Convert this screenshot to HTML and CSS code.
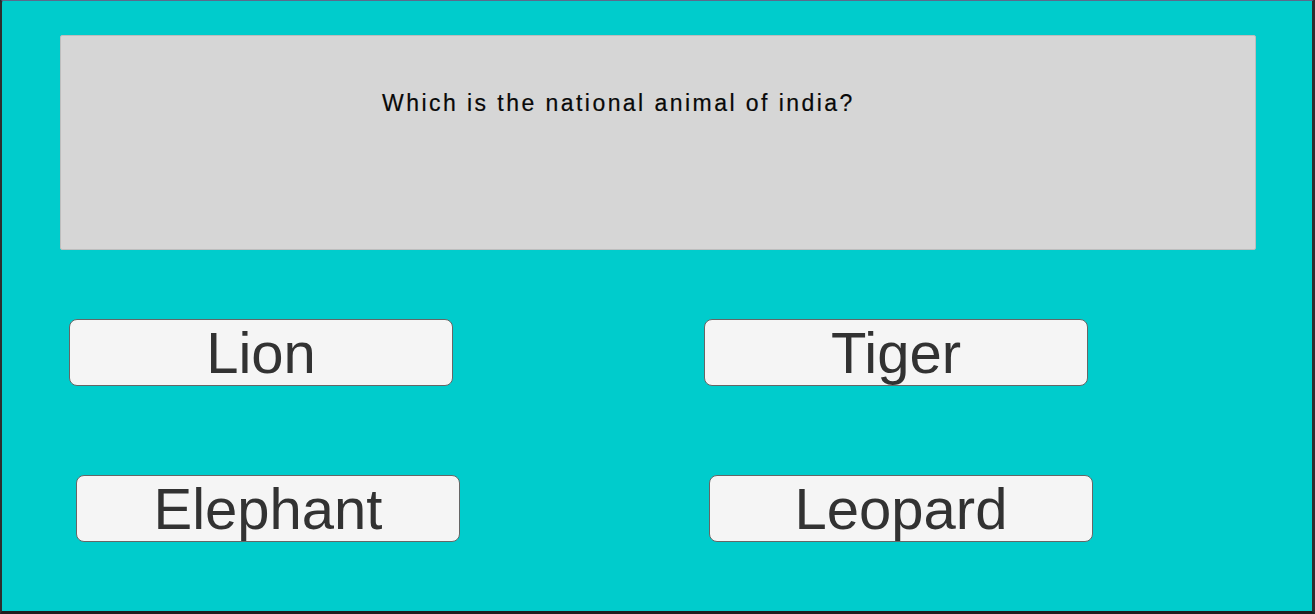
FILE: index.html
```html
<!DOCTYPE html>
<html>
<head>
<meta charset="utf-8">
<link rel="stylesheet" href="styles.css">
</head>
<body>
<div class="frame">
  <div class="question">
    <p class="question-text">Which is the national animal of india?</p>
  </div>
  <div class="answers">
    <div class="row row-1">
      <button class="answer a-lion">Lion</button>
      <button class="answer a-tiger">Tiger</button>
    </div>
    <div class="row row-2">
      <button class="answer a-elephant">Elephant</button>
      <button class="answer a-leopard">Leopard</button>
    </div>
  </div>
</div>
</body>
</html>
```

FILE: styles.css
```css
html, body {
  margin: 0;
  padding: 0;
  width: 1315px;
  height: 614px;
  overflow: hidden;
  background: #262626;
}

.frame {
  box-sizing: border-box;
  width: 1315px;
  height: 614px;
  background: #00cccc;
  border-top: 1px solid #5b6a8c;
  border-left: 2px solid #2e2e2e;
  border-right: 3px solid #2e2e2e;
  border-bottom: 3px solid #1e1e1e;
  border-top-left-radius: 3px;
  border-top-right-radius: 3px;
  display: flex;
  flex-direction: column;
}

.question {
  box-sizing: border-box;
  margin: 34px 0 0 58px;
  width: 1196px;
  height: 215px;
  background: #d6d6d6;
  border: 1px solid #bdbdbd;
  border-radius: 2px;
  padding: 54px 0 0 321px;
}

.question-text {
  margin: 0;
  font-family: "Liberation Sans", Arial, sans-serif;
  font-size: 23px;
  line-height: 27px;
  letter-spacing: 2.45px;
  color: #080808;
  -webkit-text-stroke: 0.2px #080808;
}

.answers {
  display: flex;
  flex-direction: column;
}

.row {
  display: flex;
}

.row-1 {
  margin-top: 69px;
}

.row-2 {
  margin-top: 89px;
}

.answer {
  box-sizing: border-box;
  width: 384px;
  height: 67px;
  background: #f5f5f5;
  border: 1px solid #666;
  border-radius: 8px;
  padding: 0;
  font-family: "Liberation Sans", Arial, sans-serif;
  font-size: 58px;
  line-height: 65px;
  color: #323232;
  text-align: center;
}

.a-lion { margin-left: 67px; }
.a-tiger { margin-left: 251px; }
.a-elephant { margin-left: 74px; }
.a-leopard { margin-left: 249px; }
```
